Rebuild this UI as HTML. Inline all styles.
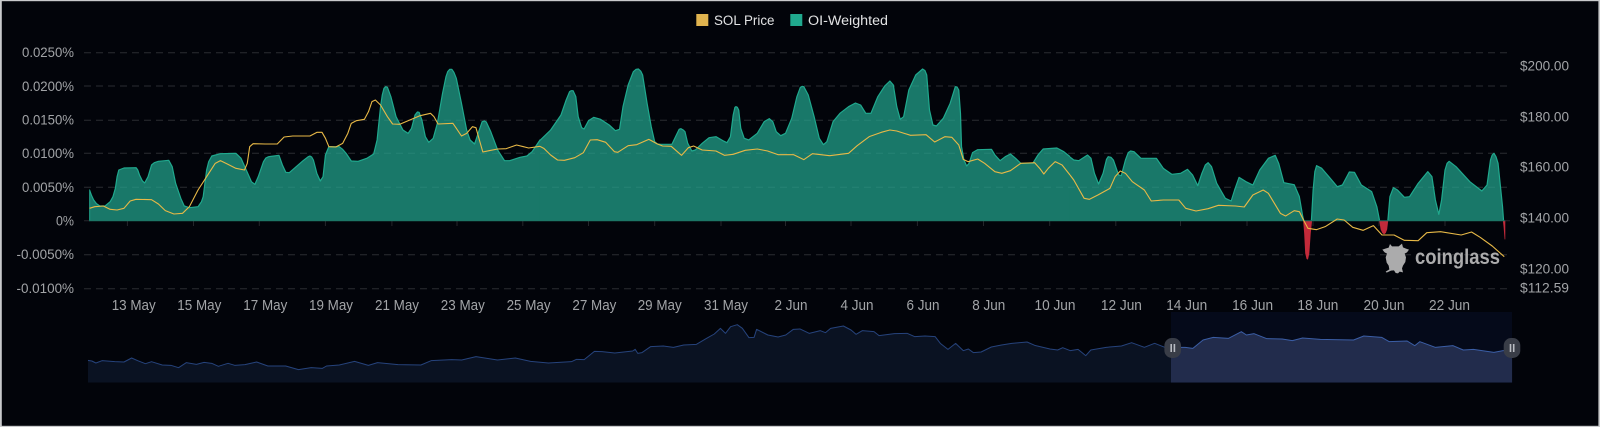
<!DOCTYPE html>
<html><head><meta charset="utf-8"><style>
html,body{margin:0;padding:0;background:#02040a;width:1600px;height:427px;overflow:hidden}
svg{display:block;position:absolute;left:0;top:0}
text{font-family:"Liberation Sans",sans-serif}
.y{font-size:14.2px;fill:#a2a4a7;text-anchor:end}
.x{font-size:15px;fill:#a2a4a7;text-anchor:middle}
.r{font-size:14.2px;fill:#a2a4a7;text-anchor:end}
.l{font-size:13.5px;fill:#e2e3e4}
.ns{vector-effect:non-scaling-stroke}
.soft{filter:blur(.35px)}
</style></head><body>
<svg width="1600" height="427" viewBox="0 0 1600 427" xmlns="http://www.w3.org/2000/svg">
<defs>
<clipPath id="c1"><rect x="259" y="-10" width="1309" height="671.5"/></clipPath>
<clipPath id="c2"><rect x="29.037" y="-10" width="1538.963" height="671.5"/></clipPath>
<clipPath id="c3"><rect x="29.037" y="-10" width="1290" height="671.5"/></clipPath>
<clipPath id="n4"><rect x="172.5" y="-10" width="1395.5" height="287.5"/></clipPath>
<clipPath id="n5"><rect x="0" y="-10" width="1396" height="287.5"/></clipPath>
<clipPath id="sel"><rect x="1171" y="300" width="341" height="90"/></clipPath>
<g id="nav" stroke-linejoin="round">
<g transform="translate(0 290) scale(.510204 .33333)" clip-path="url(#n4)"><path class="ns" d="M171,211 180,213 188,219 200,212 225,215 243,216 258,204 270,212 285,221 297,215 318,225 335,226 350,233 365,218 385,223 400,217 415,220 428,229 447,220 460,226 480,224 503,216 525,228 560,228 585,239 610,233 632,235 640,228 665,225 695,214 722,226 740,218 780,224 825,225 845,212 885,209 905,210 933,200 975,210 1010,204 1040,214 1075,219 1120,215 1130,208 1145,209 1165,184 1180,185 1205,189 1240,183 1245,178 1250,190 1258,188 1275,170 1300,168 1320,172 1340,165 1365,163 1385,145 1400,132 1412,115 1422,130 1432,110 1445,104 1455,115 1468,143 1478,142 1483,118 1505,135 1525,141 1540,135 1555,118 1568,117 1590,125 1590,300 171,300Z"/></g>
<g transform="translate(800 290) scale(.510204 .33333)" clip-path="url(#n5)"><path class="ns" d="M-20,112 0,117 18,130 40,122 50,128 60,115 85,108 100,120 110,133 122,122 145,125 155,137 185,131 210,130 225,140 245,138 265,140 275,160 290,178 305,160 320,182 330,177 340,188 355,186 375,171 395,165 415,160 445,156 460,166 490,177 505,180 515,173 530,182 545,178 560,197 570,180 600,172 630,168 650,158 675,172 695,160 715,172 755,172 770,175 790,150 810,142 840,145 865,125 875,135 890,131 915,146 945,147 965,152 985,144 1020,148 1085,150 1105,138 1140,142 1155,155 1190,153 1205,167 1215,155 1245,172 1280,167 1300,180 1320,178 1360,187 1378,182 1420,182 1420,300 -20,300Z"/></g>
</g>
</defs>
<rect width="1600" height="427" fill="#02040a"/>

<g class="soft">
<!-- grid -->
<g stroke="#2b2c31" stroke-width="1" stroke-dasharray="7 5" fill="none">
<path d="M84 52.7H1510M84 86H1510M84 120.3H1510M84 153.3H1510M84 187.3H1510M84 254.7H1510M84 288.7H1510"/>
</g>
<path d="M127.4 221v5M193.5 221v5M259.3 221v5M325.4 221v5M391.9 221v5M457 221v5M522.8 221v5M588.5 221v5M654.7 221v5M721 221v5M785.5 221v5M851 221v5M917.4 221v5M983.5 221v5M1049.7 221v5M1115.8 221v5M1180.5 221v5M1247 221v5M1313 221v5M1379 221v5M1445 221v5" stroke="#25262b" fill="none"/>
<path d="M84 220.7H90M1505 220.7H1510" stroke="#26272c"/>

<!-- teal area -->
<g fill="#24aa91" fill-opacity=".7" stroke="#20a98e" stroke-width="1.2" stroke-linejoin="round">
<g transform="scale(.3443878 .33333)" clip-path="url(#c1)"><path class="ns" d="M260,570 266,587 272,600 280,611 290,618 305,618 320,605 328,590 335,565 340,530 345,510 360,504 395,503 400,510 405,525 413,542 420,549 430,530 440,495 448,488 460,484 490,481 500,500 510,550 525,595 535,618 550,623 575,620 585,605 590,590 600,510 606,485 615,468 640,461 685,460 700,475 715,510 730,545 740,553 750,530 765,485 772,474 780,470 810,466 820,495 830,517 840,518 860,500 880,482 895,470 900,468 905,471 910,480 920,520 930,543 938,530 945,465 955,440 985,440 995,448 1005,460 1020,483 1040,484 1065,475 1085,462 1095,420 1105,320 1110,285 1115,265 1120,260 1125,262 1135,290 1150,350 1170,390 1185,400 1195,385 1205,345 1212,336 1217,337 1225,360 1235,410 1245,427 1258,415 1270,370 1285,280 1295,230 1300,215 1306,208 1312,208 1318,217 1325,235 1340,310 1355,390 1365,420 1378,432 1390,395 1400,365 1407,363 1412,366 1425,395 1445,450 1465,482 1480,482 1510,472 1530,468 1545,455 1568,420 1590,395 1590,662 260,662Z"/></g>
<g transform="translate(530 0) scale(.3443878 .33333)" clip-path="url(#c2)"><path class="ns" d="M0,460 25,425 60,390 90,345 105,300 115,275 120,272 125,272 133,290 140,350 150,383 157,387 170,362 185,352 205,358 230,375 248,392 260,388 270,320 285,255 300,215 308,208 315,207 322,214 327,225 340,310 352,380 362,425 370,432 380,433 412,433 425,405 433,388 438,386 445,390 450,395 458,430 470,453 480,450 500,430 520,413 540,410 560,422 572,428 582,410 590,345 595,322 598,320 602,322 606,330 612,385 622,415 635,420 660,400 680,365 695,356 705,365 715,395 728,407 742,400 760,355 775,290 785,262 790,259 795,260 808,285 825,350 840,415 852,434 862,425 880,365 900,340 925,320 945,309 960,315 975,340 990,340 1010,290 1030,258 1045,243 1055,255 1065,320 1075,358 1085,350 1100,270 1120,225 1140,207 1147,212 1152,225 1160,330 1170,375 1180,378 1200,355 1220,310 1235,260 1240,261 1245,270 1250,340 1253,440 1260,480 1268,498 1275,490 1285,458 1300,449 1340,448 1350,465 1365,482 1380,470 1395,462 1410,475 1425,490 1460,490 1475,465 1490,447 1530,444 1550,455 1568,470 1590,490 1590,662 0,662Z"/></g>
<g transform="translate(1060 0) scale(.3443878 .33333)" clip-path="url(#c3)"><path class="ns" d="M0,662 0,450 15,460 40,480 55,482 80,465 90,475 100,520 112,552 125,520 135,478 140,470 148,472 155,480 170,525 178,527 190,480 198,458 205,453 215,455 235,475 280,475 300,505 325,523 350,520 370,508 385,525 400,557 412,520 422,495 430,488 440,500 455,550 480,595 497,603 507,570 520,532 540,545 560,555 580,510 605,475 625,466 635,490 650,548 680,554 695,590 705,650 708,662Z"/><path class="ns" d="M730,662 735,570 740,515 745,497 760,505 785,535 805,560 820,555 840,516 855,517 875,555 905,575 920,620 928,662Z"/><path class="ns" d="M952,662 958,590 968,563 980,570 1000,592 1015,590 1040,550 1068,515 1080,530 1090,600 1100,643 1108,600 1118,510 1124,490 1130,484 1150,500 1190,545 1225,573 1240,555 1250,480 1255,465 1260,460 1266,470 1272,490 1285,620 1288,662Z"/></g>
</g>
<!-- red -->
<g transform="translate(1060 0) scale(.3443878 .33333)" fill="#c32a3a">
<path d="M706,662 709,700 712,760 716,777 720,779 724,760 728,700 732,662Z"/>
<path d="M927,662 931,688 936,699 941,703 946,699 950,688 953,662Z"/>
<path d="M1286,662 1288,680 1291,718 1293,718 1293,662Z"/>
</g>
<path d="M89 220.7H1505" stroke="#1b6a5c" stroke-width="1"/>

<!-- price -->
<g fill="none" stroke="#e8b947" stroke-width="1.1" stroke-linejoin="round">
<g transform="scale(.3443878 .33333)"><path class="ns" d="M260,625 275,620 300,618 320,628 340,630 360,625 378,603 395,598 440,599 460,612 480,632 505,642 530,640 550,620 575,570 600,530 625,490 640,482 660,492 685,505 710,510 718,490 725,440 735,431 770,432 805,432 825,411 850,408 900,408 920,397 935,397 945,415 955,440 975,441 995,430 1010,400 1020,370 1035,362 1058,358 1070,335 1080,305 1090,300 1105,315 1125,350 1140,372 1160,373 1190,360 1220,347 1250,340 1260,350 1272,372 1315,370 1325,385 1340,408 1355,400 1372,380 1382,383 1392,420 1402,456 1420,452 1445,447 1470,446 1500,435 1520,440 1535,444 1568,439"/></g>
<g transform="translate(530 0) scale(.3443878 .33333)"><path class="ns" d="M29,439 40,445 60,465 80,480 100,481 130,473 155,458 175,420 195,419 220,427 245,455 255,457 285,437 310,434 345,418 370,432 385,438 410,439 440,466 460,443 475,438 500,450 540,453 565,466 590,463 625,451 660,447 690,453 720,464 765,464 795,479 820,461 870,467 925,460 950,437 985,410 1020,397 1045,390 1065,393 1105,406 1150,404 1175,426 1205,410 1225,412 1245,435 1258,478 1272,485 1300,477 1320,490 1350,515 1370,520 1395,512 1425,490 1465,488 1480,505 1492,522 1505,505 1525,485 1545,495 1568,525"/></g>
<g transform="translate(1060 0) scale(.3443878 .33333)"><path class="ns" d="M29,525 40,540 70,595 85,598 110,585 145,565 160,530 175,513 190,520 210,545 245,570 265,603 300,600 345,600 365,625 395,633 430,626 460,616 510,618 535,621 560,585 590,570 605,580 640,640 655,648 680,632 695,635 708,662 720,685 745,689 770,680 805,657 825,660 850,682 880,691 910,677 935,705 970,705 1000,721 1040,722 1065,698 1105,695 1165,705 1195,696 1220,712 1255,738 1290,770"/></g>
</g>

<!-- watermark -->
<g transform="translate(1330 200) scale(.33333)" fill="#ababac"><path d="M180,132 186,139 206,139 216,131 219,142 228,146 237,149 231,157 224,161 228,172 226,186 219,197 216,205 219,217 209,215 204,220 197,219 192,211 183,212 170,218 167,215 178,208 176,197 170,188 167,172 171,161 164,157 157,149 166,146 176,143Z"/></g>
<text x="1415" y="264" font-size="21" font-weight="bold" fill="#ababac" textLength="85" lengthAdjust="spacingAndGlyphs">coinglass</text>

<!-- legend -->
<rect x="696.3" y="14" width="12" height="12" fill="#e0b44f"/>
<text class="l" x="714" y="24.8" textLength="60.5" lengthAdjust="spacingAndGlyphs">SOL Price</text>
<rect x="790.3" y="14" width="12" height="12" fill="#20a98e"/>
<text class="l" x="808" y="24.8" textLength="80" lengthAdjust="spacingAndGlyphs">OI-Weighted</text>

<!-- left axis -->
<text class="y" x="74" y="57" textLength="52" lengthAdjust="spacingAndGlyphs">0.0250%</text>
<text class="y" x="74" y="91" textLength="52" lengthAdjust="spacingAndGlyphs">0.0200%</text>
<text class="y" x="74" y="124.5" textLength="52" lengthAdjust="spacingAndGlyphs">0.0150%</text>
<text class="y" x="74" y="158" textLength="52" lengthAdjust="spacingAndGlyphs">0.0100%</text>
<text class="y" x="74" y="192" textLength="52" lengthAdjust="spacingAndGlyphs">0.0050%</text>
<text class="y" x="74" y="225.5" textLength="18" lengthAdjust="spacingAndGlyphs">0%</text>
<text class="y" x="74" y="259" textLength="57.5" lengthAdjust="spacingAndGlyphs">-0.0050%</text>
<text class="y" x="74" y="293" textLength="57.5" lengthAdjust="spacingAndGlyphs">-0.0100%</text>

<!-- right axis -->
<text class="r" x="1569" y="70.5" textLength="49" lengthAdjust="spacingAndGlyphs">$200.00</text>
<text class="r" x="1569" y="121.5" textLength="49" lengthAdjust="spacingAndGlyphs">$180.00</text>
<text class="r" x="1569" y="171.5" textLength="49" lengthAdjust="spacingAndGlyphs">$160.00</text>
<text class="r" x="1569" y="222.5" textLength="49" lengthAdjust="spacingAndGlyphs">$140.00</text>
<text class="r" x="1569" y="273.5" textLength="49" lengthAdjust="spacingAndGlyphs">$120.00</text>
<text class="r" x="1569" y="292.5" textLength="49" lengthAdjust="spacingAndGlyphs">$112.59</text>

<!-- x axis -->
<g>
<text class="x" x="133.7" y="310" textLength="44" lengthAdjust="spacingAndGlyphs">13 May</text>
<text class="x" x="199.3" y="310" textLength="44" lengthAdjust="spacingAndGlyphs">15 May</text>
<text class="x" x="265.3" y="310" textLength="44" lengthAdjust="spacingAndGlyphs">17 May</text>
<text class="x" x="331" y="310" textLength="44" lengthAdjust="spacingAndGlyphs">19 May</text>
<text class="x" x="397" y="310" textLength="44" lengthAdjust="spacingAndGlyphs">21 May</text>
<text class="x" x="462.8" y="310" textLength="44" lengthAdjust="spacingAndGlyphs">23 May</text>
<text class="x" x="528.6" y="310" textLength="44" lengthAdjust="spacingAndGlyphs">25 May</text>
<text class="x" x="594.4" y="310" textLength="44" lengthAdjust="spacingAndGlyphs">27 May</text>
<text class="x" x="659.7" y="310" textLength="44" lengthAdjust="spacingAndGlyphs">29 May</text>
<text class="x" x="726" y="310" textLength="44" lengthAdjust="spacingAndGlyphs">31 May</text>
<text class="x" x="791" y="310" textLength="33" lengthAdjust="spacingAndGlyphs">2 Jun</text>
<text class="x" x="857" y="310" textLength="33" lengthAdjust="spacingAndGlyphs">4 Jun</text>
<text class="x" x="923" y="310" textLength="33" lengthAdjust="spacingAndGlyphs">6 Jun</text>
<text class="x" x="988.8" y="310" textLength="33" lengthAdjust="spacingAndGlyphs">8 Jun</text>
<text class="x" x="1055" y="310" textLength="41" lengthAdjust="spacingAndGlyphs">10 Jun</text>
<text class="x" x="1121.4" y="310" textLength="41" lengthAdjust="spacingAndGlyphs">12 Jun</text>
<text class="x" x="1186.7" y="310" textLength="41" lengthAdjust="spacingAndGlyphs">14 Jun</text>
<text class="x" x="1252.6" y="310" textLength="41" lengthAdjust="spacingAndGlyphs">16 Jun</text>
<text class="x" x="1317.9" y="310" textLength="41" lengthAdjust="spacingAndGlyphs">18 Jun</text>
<text class="x" x="1384" y="310" textLength="41" lengthAdjust="spacingAndGlyphs">20 Jun</text>
<text class="x" x="1449.5" y="310" textLength="41" lengthAdjust="spacingAndGlyphs">22 Jun</text>
</g>

<!-- navigator -->
<use href="#nav" fill="#0a1222" stroke="#26437c" stroke-width="1"/>
<rect x="1171" y="312" width="341" height="70.7" fill="#050a1a"/>
<g clip-path="url(#sel)"><use href="#nav" fill="#222c4c" stroke="#3b5ea6" stroke-width="1"/></g>
<g>
<rect x="1164.4" y="338" width="16.6" height="20" rx="7.5" fill="#393d47"/>
<rect x="1170.4" y="344" width="1.6" height="8" fill="#b9bcc2"/>
<rect x="1173.6" y="344" width="1.6" height="8" fill="#b9bcc2"/>
<rect x="1503.7" y="338" width="16.6" height="20" rx="7.5" fill="#393d47"/>
<rect x="1509.7" y="344" width="1.6" height="8" fill="#b9bcc2"/>
<rect x="1512.9" y="344" width="1.6" height="8" fill="#b9bcc2"/>
</g>
</g>

<!-- frame -->
<rect x="0" y="0" width="1600" height="1.2" fill="#c9cacc"/>
<rect x="0" y="0" width="1.8" height="427" fill="#c9cacc"/>
<rect x="1598.4" y="0" width="1.6" height="427" fill="#c9cacc"/>
<rect x="0" y="425.8" width="1600" height="1.2" fill="#c9cacc"/>
</svg>
</body></html>
